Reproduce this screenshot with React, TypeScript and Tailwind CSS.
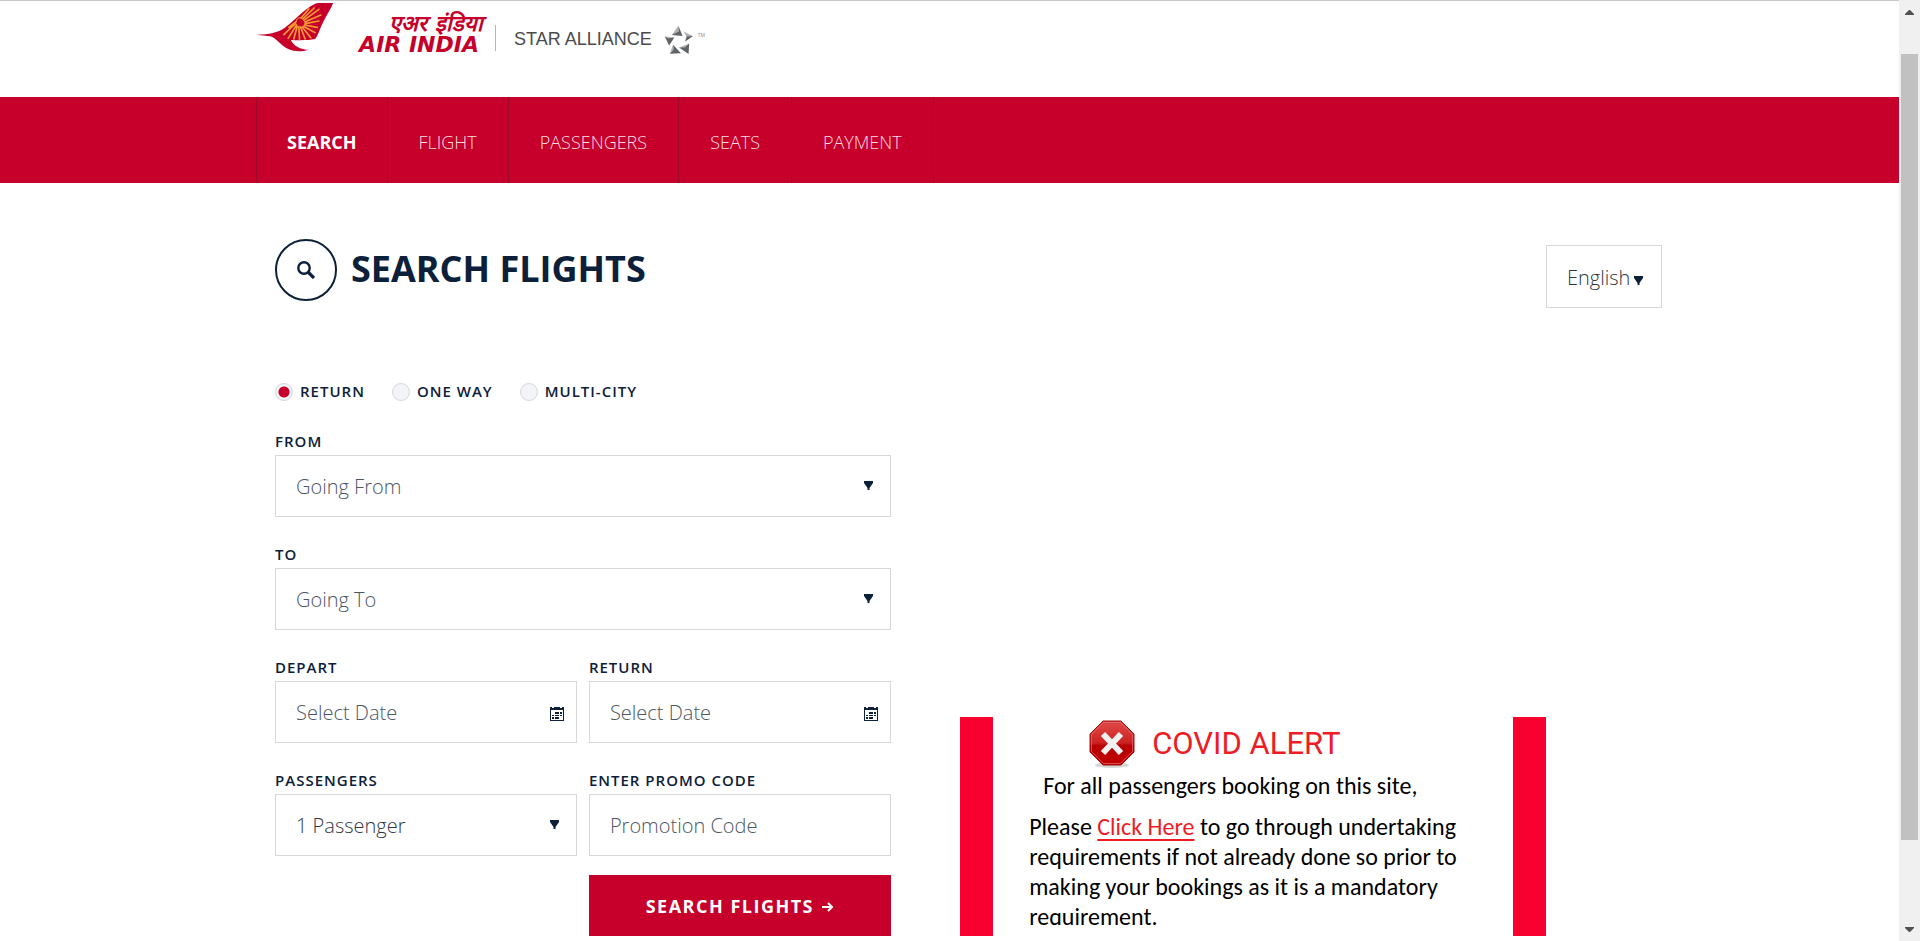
import React from "react";
import type { ReactNode } from "react";

const steps = ["FLIGHT", "PASSENGERS", "SEATS", "PAYMENT"];

const labelClass = "block text-[15px] leading-[27px] font-semibold tracking-[1px] text-[#0c203a]";
const fieldClass =
  "block h-[62px] w-full appearance-none border border-[#d8d8d8] bg-white px-5 text-[20px] font-light outline-none placeholder:text-[#4d5764] placeholder:opacity-100";

function AirIndiaMark() {
  return (
    <svg viewBox="48 6 236 150" className="h-[50px] w-[79px] shrink-0" aria-hidden="true">
      <path
        fill="#c6002b"
        d="M50 104C88 103 112 98 134 83C162 63 190 30 222 13C228 9 234 9 240 9H279C272 27 258 48 248 68C239 86 234 106 225 117C206 121 180 121 152 120C160 137 178 148 203 149C186 156 163 155 144 147C121 137 108 113 90 109C78 106 65 107 50 104Z"
      />
      <g stroke="#f79a32" strokeWidth="5" strokeLinecap="round">
        <path d="M183 54L206 27M188 57L222 24M191 61L236 28M194 66L242 45M195 71L236 63M193 75L231 82M190 79L225 98M186 81L212 113M181 81L195 117M176 80L178 118M171 79L161 117M169 75L144 115M166 70L131 104M168 65L146 82" />
      </g>
      <circle cx="180" cy="66" r="9" fill="#c6002b" />
      <path fill="none" stroke="#f79a32" strokeWidth="3" d="M168 64C170 53 181 50 190 56" />
    </svg>
  );
}

function StarAllianceMark() {
  return (
    <svg viewBox="1275 70 90 88" className="h-[29px] w-[30px] shrink-0" aria-hidden="true">
      <g fill="#b0b2b4">
        <path d="M1318 72L1298 100L1322 92Z" />
        <path d="M1334 90L1362 103L1344 107Z" />
        <path d="M1351 126L1320 138L1340 141Z" />
        <path d="M1302 130L1292 157L1306 147Z" />
        <path d="M1277 105L1306 108L1288 115Z" />
      </g>
      <g fill="#606366">
        <path d="M1318 72L1331 103L1298 100L1320 90Z" />
        <path d="M1363 103L1338 121L1343 105Z" />
        <path d="M1351 126L1349 158L1320 138L1338 138Z" />
        <path d="M1292 157L1326 156L1302 130L1304 145Z" />
        <path d="M1277 105L1290 132L1306 108L1288 111Z" />
      </g>
    </svg>
  );
}

function Caret() {
  return (
    <svg viewBox="0 0 9 9" className="size-[9px]" aria-hidden="true">
      <path d="M0 0H9V2L5.5 7V9H3.5V7L0 2Z" fill="#0c203a" />
    </svg>
  );
}

function CalendarIcon() {
  return (
    <svg viewBox="0 0 14 14" className="size-[14px]" shapeRendering="crispEdges" aria-hidden="true">
      <path
        fill="#0c203a"
        fillRule="evenodd"
        d="M0 0H2V1H4V0H10V1H12V0H14V14H0ZM1 3V13H13V3ZM5 5H9V7H5ZM10 5H12V7H10ZM2 8H4V9H2ZM5 8H9V9H5ZM10 8H12V9H10ZM2 10H4V12H2ZM5 10H9V12H5Z"
      />
    </svg>
  );
}

function StopIcon() {
  return (
    <svg viewBox="0 0 46 48" className="h-12 w-[46px]" aria-hidden="true">
      <defs>
        <linearGradient id="stop" x1="0" y1="0" x2="0" y2="1">
          <stop offset="0" stopColor="#df4a4a" />
          <stop offset="0.5" stopColor="#cc2222" />
          <stop offset="0.56" stopColor="#b80000" />
          <stop offset="1" stopColor="#c00000" />
        </linearGradient>
      </defs>
      <ellipse cx="23" cy="45" rx="17" ry="3" fill="#bbbbbb" opacity="0.6" />
      <path d="M14 1H32L45 14V32L32 45H14L1 32V14Z" fill="url(#stop)" stroke="#a00d0d" />
      <path d="M14.500 2.500H31.500L43.500 14.500V31.500L31.500 43.500H14.500L2.500 31.500V14.500Z" fill="none" stroke="#e56a6a" opacity="0.7" />
      <path d="M14 14L32 33M32 14L14 33" stroke="#f1f1f1" strokeWidth="6" />
    </svg>
  );
}

function Radio({ label, checked }: { label: string; checked?: boolean }) {
  return (
    <label className="flex items-center gap-[7px] text-[15px] leading-[27px] font-semibold tracking-[1px]">
      <input
        type="radio"
        name="trip"
        defaultChecked={checked}
        className="size-[18px] appearance-none rounded-full border border-[#d8d8d8] bg-[#f3f4f8] checked:bg-[radial-gradient(circle,#c6002b_5px,#f3f4f8_6px)]"
      />
      {label}
    </label>
  );
}

function Field({ id, label, icon, children }: { id: string; label: string; icon?: ReactNode; children: ReactNode }) {
  return (
    <div className="min-w-0 flex-1">
      <label htmlFor={id} className={labelClass}>
        {label}
      </label>
      <div className="relative">
        {children}
        {icon}
      </div>
    </div>
  );
}

const wideCaret = (
  <span className="pointer-events-none absolute top-[26px] right-[18px]">
    <Caret />
  </span>
);

const calendar = (
  <span className="pointer-events-none absolute top-[26px] right-[13px]">
    <CalendarIcon />
  </span>
);

export default function App() {
  return (
    <div className="flex min-h-screen bg-white font-['Open_Sans',sans-serif] text-[#0c203a]">
      <div className="min-w-0 flex-1">
        <header className="h-[97px] border-t border-[#c8c8c8]">
          <div className="mx-auto flex max-w-[1461px] items-start pl-[37px]">
            <a href="#home" className="flex items-start pt-px">
              <AirIndiaMark />
              <span className="flex w-[148px] flex-col items-end pt-[11px] font-['DejaVu_Sans',sans-serif] font-black text-[#c6002b] italic">
                <span className="text-[22px] leading-[22px]">एअर इंडिया</span>
                <span className="pr-1 text-[22px] leading-[20px]">AIR INDIA</span>
              </span>
            </a>
            <span className="mt-6 ml-3 h-[26px] w-px bg-[#b5b5b5]" />
            <a
              href="#alliance"
              className="mt-6 ml-[18px] flex items-center gap-3 font-['Liberation_Sans',sans-serif] text-[18px] text-[#4b4b4d]"
            >
              STAR ALLIANCE
              <StarAllianceMark />
            </a>
            <span className="mt-[31px] ml-1 text-[5px] leading-[6px] text-[#888888]">TM</span>
          </div>
        </header>

        <nav className="bg-[#c6002b]">
          <ol className="mx-auto flex h-[86px] max-w-[1461px] pl-[37px] text-[18px]">
            <li className="flex border-x border-[#9c0a2a]">
              <a href="#search" className="flex items-center px-[30px] pt-1 font-bold text-white">
                SEARCH
              </a>
            </li>
            {steps.map((step) => (
              <li key={step} className="flex border-r border-[#9c0a2a]">
                <a href={"#" + step.toLowerCase()} className="flex items-center px-[31px] pt-1 font-light text-[#f9dde3]">
                  {step}
                </a>
              </li>
            ))}
          </ol>
        </nav>

        <main className="mx-auto max-w-[1461px] pr-[18px] pl-14">
          <div className="flex items-start justify-between pt-14">
            <h1 className="flex items-center gap-[14px] text-[36px] leading-[60px] font-bold">
              <span className="flex size-[62px] items-center justify-center rounded-full border-2 border-[#0c203a]">
                <svg viewBox="0 0 18 18" className="size-[18px]" fill="none" stroke="#0c203a" aria-hidden="true">
                  <circle cx="7" cy="7" r="5.700" strokeWidth="2.400" />
                  <path d="M11 11L17 17" strokeWidth="3.200" />
                </svg>
              </span>
              <span className="pb-0.5">SEARCH FLIGHTS</span>
            </h1>
            <div className="relative mt-[6px]">
              <select
                aria-label="Language"
                className="block h-[63px] w-[116px] appearance-none border border-[#d8d8d8] bg-white pt-0.5 pl-5 text-[20px] font-light text-[#303743] outline-none"
              >
                <option>English</option>
              </select>
              <span className="pointer-events-none absolute top-[31px] right-[19px]">
                <Caret />
              </span>
            </div>
          </div>

          <div className="flex items-end justify-between pt-[70px]">
            <form className="flex w-[44.4%] flex-col">
              <div className="mb-[23px] flex gap-[27px]">
                <Radio label="RETURN" checked />
                <Radio label="ONE WAY" />
                <Radio label="MULTI-CITY" />
              </div>
              <div className="flex flex-col gap-6">
                <Field id="from" label="FROM" icon={wideCaret}>
                  <select id="from" className={fieldClass + " pt-0.5 text-[#4d5764]"}>
                    <option>Going From</option>
                  </select>
                </Field>
                <Field id="to" label="TO" icon={wideCaret}>
                  <select id="to" className={fieldClass + " pt-0.5 text-[#4d5764]"}>
                    <option>Going To</option>
                  </select>
                </Field>
                <div className="flex gap-3">
                  <Field id="depart" label="DEPART" icon={calendar}>
                    <input id="depart" type="text" placeholder="Select Date" className={fieldClass} />
                  </Field>
                  <Field id="return" label="RETURN" icon={calendar}>
                    <input id="return" type="text" placeholder="Select Date" className={fieldClass} />
                  </Field>
                </div>
                <div className="flex gap-3">
                  <Field id="passengers" label="PASSENGERS" icon={wideCaret}>
                    <select id="passengers" className={fieldClass + " pt-0.5 text-[#303743]"}>
                      <option>1 Passenger</option>
                    </select>
                  </Field>
                  <Field id="promo" label="ENTER PROMO CODE">
                    <input id="promo" type="text" placeholder="Promotion Code" className={fieldClass} />
                  </Field>
                </div>
              </div>
              <div className="mt-[19px] flex gap-3">
                <div className="flex-1" />
                <button
                  type="submit"
                  className="flex h-[61px] flex-1 items-center justify-center gap-2 bg-[#c6002b] pt-0.5 text-[18px] font-bold tracking-[1.5px] text-white"
                >
                  SEARCH FLIGHTS
                  <svg viewBox="0 0 12 10" className="h-[10px] w-3" fill="none" stroke="white" strokeWidth="2" aria-hidden="true">
                    <path d="M0 5H10M6 1L10 5L6 9" />
                  </svg>
                </button>
              </div>
            </form>

            <section className="mr-[8.4%] flex h-[219px] w-[42.2%] justify-between border-x-[33px] border-[#f8002f] font-['Carlito',Lato,sans-serif] text-[24px] leading-[30px] text-black">
              <div className="h-[208px] overflow-hidden pl-9">
                <h2 className="mt-[3px] ml-[60px] flex h-12 items-center gap-[17px] font-[Roboto,sans-serif] text-[31px] text-[#ee1c25]">
                  <StopIcon />
                  COVID ALERT
                </h2>
                <p className="mt-[3px] ml-[14px]">For all passengers booking on this site,</p>
                <p className="mt-[11px]">
                  Please{" "}
                  <a href="#undertaking" className="text-[#ee1c25] underline underline-offset-4">
                    Click Here
                  </a>{" "}
                  to go through undertaking
                  <br />
                  requirements if not already done so prior to
                  <br />
                  making your bookings as it is a mandatory
                  <br />
                  requirement.
                </p>
              </div>
            </section>
          </div>
        </main>
      </div>

      <aside className="sticky top-0 flex h-screen w-[21px] flex-col items-center bg-[#f0f0f0] py-[9px]" aria-hidden="true">
        <svg viewBox="0 0 9 5" className="mt-px h-[5px] w-[9px]" fill="#505050">
          <path d="M4 0H5L9 4V5H0V4Z" />
        </svg>
        <div className="mt-[39px] mb-[87px] w-[17px] flex-1 bg-[#c1c1c1]" />
        <svg viewBox="0 0 9 5" className="h-[5px] w-[9px]" fill="#505050">
          <path d="M0 0H9V1L5 5H4L0 1Z" />
        </svg>
      </aside>
    </div>
  );
}
